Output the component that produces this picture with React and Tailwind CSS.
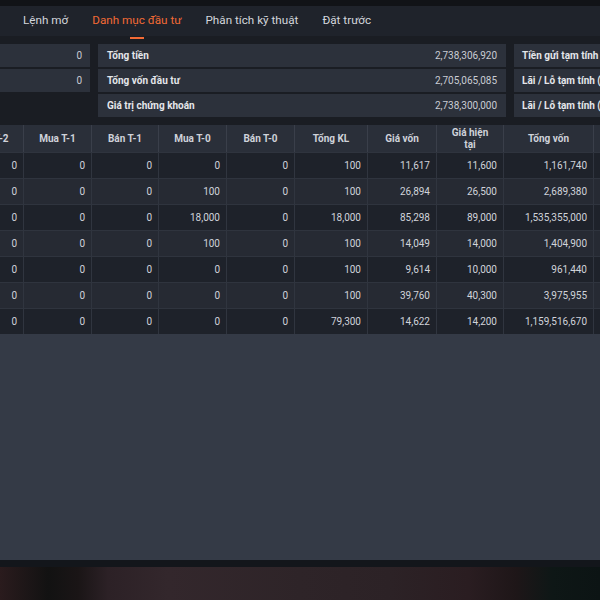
const tabs = ['Lệnh mở', 'Danh mục đầu tư', 'Phân tích kỹ thuật', 'Đặt trước']

const summary = [
  { left: '0', label: 'Tổng tiền', value: '2,738,306,920', right: 'Tiền gửi tạm tính' },
  { left: '0', label: 'Tổng vốn đầu tư', value: '2,705,065,085', right: 'Lãi / Lỗ tạm tính (VND)' },
  { left: null, label: 'Giá trị chứng khoán', value: '2,738,300,000', right: 'Lãi / Lỗ tạm tính (%)' },
]

const cols = [
  { title: 'Bán T-2', w: 'w-[64px] ml-[-40px]' },
  { title: 'Mua T-1', w: 'w-[68px]' },
  { title: 'Bán T-1', w: 'w-[67px]' },
  { title: 'Mua T-0', w: 'w-[68px]' },
  { title: 'Bán T-0', w: 'w-[68px]' },
  { title: 'Tổng KL', w: 'w-[73px]' },
  { title: 'Giá vốn', w: 'w-[69px]' },
  { title: 'Giá hiện tại', w: 'w-[67px]', two: true },
  { title: 'Tổng vốn', w: 'w-[90px]' },
  { title: 'Lãi/Lỗ', w: 'w-[80px]' },
]

const rows = [
  ['0', '0', '0', '0', '0', '100', '11,617', '11,600', '1,161,740', ''],
  ['0', '0', '0', '100', '0', '100', '26,894', '26,500', '2,689,380', ''],
  ['0', '0', '0', '18,000', '0', '18,000', '85,298', '89,000', '1,535,355,000', ''],
  ['0', '0', '0', '100', '0', '100', '14,049', '14,000', '1,404,900', ''],
  ['0', '0', '0', '0', '0', '100', '9,614', '10,000', '961,440', ''],
  ['0', '0', '0', '0', '0', '100', '39,760', '40,300', '3,975,955', ''],
  ['0', '0', '0', '0', '0', '79,300', '14,622', '14,200', '1,159,516,670', ''],
]

export default function App() {
  return (
    <div className="w-[600px] h-[600px] overflow-hidden flex flex-col bg-[#1a1d23] font-['Roboto','Noto_Sans',sans-serif]">
      <div className="h-[6px] shrink-0 bg-[#111317]" />

      <div className="h-[30px] shrink-0 bg-[#1f232b] flex items-start pl-[23px] gap-6">
        {tabs.map((t, i) => (
          <div key={t} className="flex flex-col items-center pt-[6px]">
            <span className={`text-[11.7px] leading-[16px] whitespace-nowrap ${i === 1 ? 'text-[#f26a35]' : 'text-[#d3d6dc]'}`}>{t}</span>
            <div className={`mt-[9px] h-[2px] w-[14px] ${i === 1 ? 'bg-[#f26a35]' : 'bg-transparent'}`} />
          </div>
        ))}
      </div>

      <div className="mt-2 flex gap-2 shrink-0">
        <div className="w-[90px] shrink-0 flex flex-col gap-[2px]">
          {summary.map((s, i) => (
            <div key={i} className={`h-[23px] flex items-center justify-end pr-2 text-[10px] text-[#c9ccd3] ${s.left !== null ? 'bg-[#2c313b]' : ''}`}>{s.left}</div>
          ))}
        </div>
        <div className="w-[408px] shrink-0 flex flex-col gap-[2px]">
          {summary.map((s) => (
            <div key={s.label} className="h-[23px] bg-[#2c313b] flex items-center justify-between px-[9px] text-[10px]">
              <span className="font-bold text-[#e4e6ea]">{s.label}</span>
              <span className="text-[#c9ccd3]">{s.value}</span>
            </div>
          ))}
        </div>
        <div className="w-[200px] shrink-0 flex flex-col gap-[2px]">
          {summary.map((s) => (
            <div key={s.right} className="h-[23px] bg-[#2c313b] flex items-center px-[8px] text-[10px] font-bold text-[#e4e6ea] whitespace-nowrap">{s.right}</div>
          ))}
        </div>
      </div>

      <div className="mt-2 shrink-0 flex flex-col">
        <div className="flex h-[27px] bg-[#2a2f39]">
          {cols.map((c) => (
            <div key={c.title} className={`${c.w} shrink-0 border-r border-[#3a3f4a] flex items-center justify-center text-center text-[10px] leading-[12px] font-bold text-[#cfd2d9] whitespace-nowrap`}>
              {c.two ? <span>Giá hiện<br />tại</span> : c.title}
            </div>
          ))}
        </div>
        {rows.map((r, ri) => (
          <div key={ri} className={`flex h-[26px] border-t border-[#2f343e] ${ri % 2 === 0 ? 'bg-[#1e222a]' : 'bg-[#262a33]'}`}>
            {r.map((v, ci) => (
              <div key={ci} className={`${cols[ci].w} shrink-0 border-r border-[#30353f] flex items-center justify-end pr-[6px] text-[10px] text-[#d0d3da]`}>{v}</div>
            ))}
          </div>
        ))}
      </div>

      <div className="flex-1 bg-[#343a46]" />
      <div className="h-[7px] shrink-0 bg-[#13161b]" />
      <div className="h-[33px] shrink-0 bg-[linear-gradient(90deg,#2a1b1d_0%,#121212_8%,#1a1516_13%,#2c2126_18%,#33272c_28%,#2e2428_50%,#2c2226_65%,#2a1d21_78%,#1e1618_86%,#0e1716_92%,#0c1414_100%)]" />
    </div>
  )
}
